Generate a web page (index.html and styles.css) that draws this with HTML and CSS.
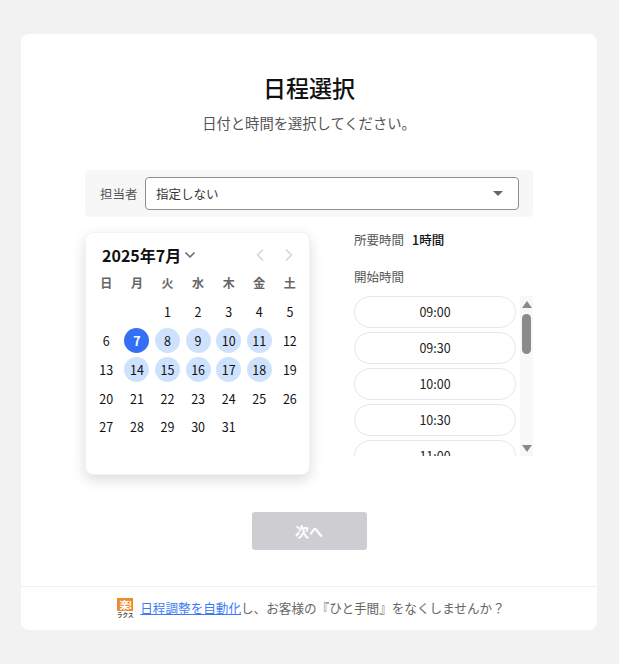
FILE: index.html
```html
<!DOCTYPE html>
<html lang="ja">
<head>
  <meta charset="UTF-8">
  <title>日程選択</title>
  <link rel="stylesheet" href="styles.css">
</head>
<body>
  <div class="card">
    <div class="content">
      <h1>日程選択</h1>
      <p class="lead">日付と時間を選択してください。</p>

      <div class="staff-bar">
        <span class="staff-label">担当者</span>
        <div class="select">
          <span>指定しない</span>
          <span class="select-arrow"></span>
        </div>
      </div>

      <div class="picker">
        <div class="calendar">
          <div class="cal-head">
            <span class="cal-month">2025年7月</span>
            <svg class="cal-caret" width="12" height="8" viewBox="0 0 12 8"><path d="M1.500 1.500 6 6l4.500-4.500" fill="none" stroke="#666" stroke-width="1.500"/></svg>
            <div class="cal-nav">
              <svg width="10" height="14" viewBox="0 0 10 14"><path d="M8 1.500 2.500 7 8 12.500" fill="none" stroke="#d5d5d8" stroke-width="1.500"/></svg>
              <svg width="10" height="14" viewBox="0 0 10 14"><path d="M2 1.500 7.500 7 2 12.500" fill="none" stroke="#d5d5d8" stroke-width="1.500"/></svg>
            </div>
          </div>
          <div class="cal-grid">
            <span class="dow">日</span><span class="dow">月</span><span class="dow">火</span><span class="dow">水</span><span class="dow">木</span><span class="dow">金</span><span class="dow">土</span>
            <span></span><span></span><span class="day">1</span><span class="day">2</span><span class="day">3</span><span class="day">4</span><span class="day">5</span>
            <span class="day">6</span><span class="day today">7</span><span class="day open">8</span><span class="day open">9</span><span class="day open">10</span><span class="day open">11</span><span class="day">12</span>
            <span class="day">13</span><span class="day open">14</span><span class="day open">15</span><span class="day open">16</span><span class="day open">17</span><span class="day open">18</span><span class="day">19</span>
            <span class="day">20</span><span class="day">21</span><span class="day">22</span><span class="day">23</span><span class="day">24</span><span class="day">25</span><span class="day">26</span>
            <span class="day">27</span><span class="day">28</span><span class="day">29</span><span class="day">30</span><span class="day">31</span>
          </div>
        </div>

        <div class="times">
          <div class="duration"><span class="muted">所要時間</span><strong>1時間</strong></div>
          <div class="muted start-label">開始時間</div>
          <div class="time-wrap">
            <div class="time-list">
              <div class="time">09:00</div>
              <div class="time">09:30</div>
              <div class="time">10:00</div>
              <div class="time">10:30</div>
              <div class="time">11:00</div>
            </div>
            <div class="scrollbar">
              <span class="tri-up"></span>
              <span class="thumb"></span>
              <span class="tri-down"></span>
            </div>
          </div>
        </div>
      </div>

      <div class="actions">
        <button class="next" disabled>次へ</button>
      </div>
    </div>

    <div class="footer">
      <span class="logo"><span class="logo-mark">楽!</span><span class="logo-sub">ラクス</span></span>
      <span><a href="#">日程調整を自動化</a>し、お客様の『ひと手間』をなくしませんか？</span>
    </div>
  </div>
</body>
</html>
```

FILE: styles.css
```css
* {
  box-sizing: border-box;
}

body {
  margin: 0;
  height: 664px;
  overflow: hidden;
  padding: 34px 22px 34px 21px;
  font-family: "Noto Sans CJK JP", "Noto Sans", sans-serif;
  background-color: #f2f2f2;
  color: #111;
}

.card {
  height: 596px;
  background: #fff;
  border-radius: 8px;
  display: flex;
  flex-direction: column;
}

.content {
  flex: 1;
  padding: 35px 64px 0;
}

h1 {
  margin: 0;
  height: 36px;
  line-height: 36px;
  font-size: 23px;
  font-weight: 500;
  text-align: center;
}

.lead {
  margin: 8px 0 0;
  height: 20px;
  line-height: 20px;
  font-size: 14.300px;
  color: #555;
  text-align: center;
}

.staff-bar {
  margin-top: 37px;
  height: 47px;
  padding: 7px 14px 7px 15px;
  display: flex;
  align-items: center;
  gap: 7.500px;
  background: #f7f7f7;
  border-radius: 4px;
}

.staff-label {
  font-size: 12.500px;
  color: #555;
}

.select {
  flex: 1;
  height: 33px;
  padding: 0 15px 0 10px;
  display: flex;
  align-items: center;
  justify-content: space-between;
  background: #fff;
  border: 1px solid #8f8f8f;
  border-radius: 4px;
  font-size: 12.500px;
  color: #333;
}

.select-arrow {
  width: 0;
  height: 0;
  border-left: 5px solid transparent;
  border-right: 5px solid transparent;
  border-top: 5px solid #666;
}

.picker {
  margin-top: 15px;
  display: flex;
  gap: 44px;
}

.calendar {
  width: 225px;
  height: 243px;
  padding: 10px 5px 0;
  background: #fff;
  border: 1px solid #f3f3f3;
  border-radius: 8px;
  box-shadow: 0 5px 14px rgba(0,0,0,0.14);
}

.cal-head {
  height: 24px;
  padding-left: 11px;
  display: flex;
  align-items: center;
  gap: 3px;
}

.cal-month {
  font-size: 16px;
  font-weight: 700;
}

.cal-nav {
  margin-left: auto;
  padding-right: 10px;
  display: flex;
  gap: 19px;
}

.cal-grid {
  margin-top: 1px;
  display: grid;
  grid-template-columns: repeat(7, 30.6px);
  grid-auto-rows: 28.900px;
  justify-items: center;
  align-items: center;
}

.dow {
  font-size: 12px;
  font-weight: 700;
  color: #666;
}

.day {
  width: 25px;
  height: 25px;
  border-radius: 50%;
  display: flex;
  align-items: center;
  justify-content: center;
  font-size: 12.500px;
  color: #111;
}

.open {
  background: #cfe2fd;
}

.today {
  background: #3370f5;
  color: #fff;
  font-weight: 700;
}

.times {
  flex: 1;
  font-size: 12.500px;
}

.muted {
  color: #555;
}

.duration {
  height: 16px;
  display: flex;
  gap: 8px;
  line-height: 16px;
}

.duration strong {
  font-weight: 500;
  color: #111;
}

.start-label {
  margin-top: 20px;
  height: 18px;
  line-height: 18px;
}

.time-wrap {
  margin-top: 10px;
  height: 160px;
  display: flex;
  justify-content: space-between;
}

.time-list {
  width: 162px;
  overflow: hidden;
  display: flex;
  flex-direction: column;
  gap: 4px;
}

.time {
  flex: none;
  height: 32px;
  line-height: 29px;
  text-align: center;
  border: 1px solid #e6e6e6;
  border-radius: 16px;
  color: #222;
}

.scrollbar {
  width: 13px;
  padding: 5px 2px 4px;
  display: flex;
  flex-direction: column;
  align-items: center;
  background: #f8f8f8;
}

.tri-up,
.tri-down {
  width: 0;
  height: 0;
  border-left: 5px solid transparent;
  border-right: 5px solid transparent;
}

.tri-up {
  border-bottom: 7px solid #8a8a8a;
}

.tri-down {
  margin-top: auto;
  border-top: 7px solid #8a8a8a;
}

.thumb {
  margin-top: 6px;
  width: 9px;
  height: 40px;
  border-radius: 5px;
  background: #8a8a8a;
}

.actions {
  margin-top: 37px;
  display: flex;
  justify-content: center;
}

.next {
  width: 115px;
  height: 38px;
  border: none;
  border-radius: 3px;
  background: #cdcdd2;
  color: #fff;
  font-family: inherit;
  font-size: 14px;
  font-weight: 700;
}

.footer {
  height: 44px;
  padding: 0 0 2px 4px;
  display: flex;
  align-items: center;
  justify-content: center;
  gap: 7px;
  border-top: 1px solid #f0f0f0;
  font-size: 12.600px;
  color: #666;
}

.footer a {
  color: #3d7bf5;
}

.logo {
  width: 16px;
  display: flex;
  flex-direction: column;
  align-items: center;
}

.logo-mark {
  width: 16px;
  height: 13px;
  line-height: 13px;
  background: #ee8a2e;
  color: #fff;
  font-size: 10px;
  font-weight: 700;
  letter-spacing: -1px;
  text-align: center;
  white-space: nowrap;
}

.logo-sub {
  height: 6px;
  margin-top: 1px;
  line-height: 6px;
  font-size: 5.500px;
  font-weight: 700;
  color: #444;
  white-space: nowrap;
}
```
